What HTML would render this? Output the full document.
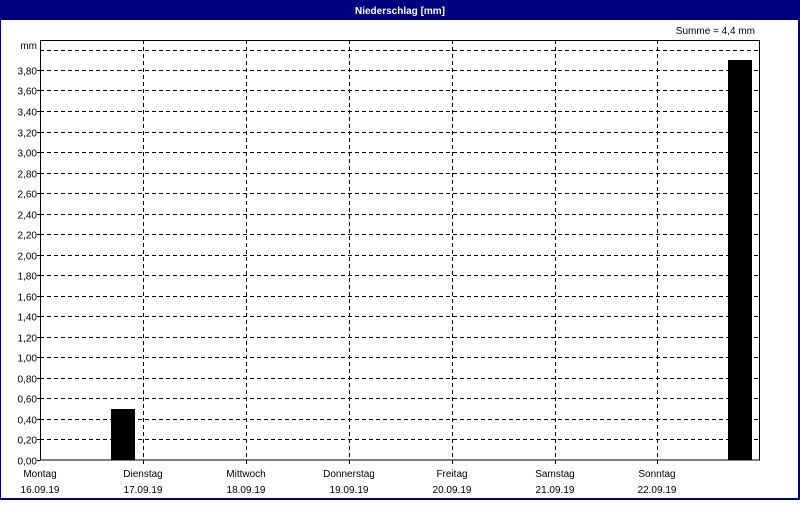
<!DOCTYPE html>
<html><head><style>
body{margin:0;width:800px;height:500px;overflow:hidden;background:#fff;font-family:"Liberation Sans",sans-serif;}
</style></head><body>
<svg width="800" height="500" xmlns="http://www.w3.org/2000/svg" font-family="Liberation Sans, sans-serif" font-size="10">
<rect x="0" y="0" width="800" height="500" fill="#000080"/>
<rect x="1" y="20" width="797" height="478" fill="#fff"/>
<text x="400" y="14" fill="#fff" font-weight="bold" text-anchor="middle" font-size="10">Niederschlag [mm]</text>
<text x="755" y="34" text-anchor="end">Summe = 4,4 mm</text>
<text x="37" y="49" text-anchor="end">mm</text>
<g stroke="#000" stroke-dasharray="4,3" stroke-width="1">
<line x1="40" y1="50.5" x2="760" y2="50.5"/>
<line x1="143.5" y1="40" x2="143.5" y2="460"/>
<line x1="246.5" y1="40" x2="246.5" y2="460"/>
<line x1="349.5" y1="40" x2="349.5" y2="460"/>
<line x1="452.5" y1="40" x2="452.5" y2="460"/>
<line x1="555.5" y1="40" x2="555.5" y2="460"/>
<line x1="657.5" y1="40" x2="657.5" y2="460"/>
</g>
<g id="h"></g>
<rect x="111" y="409" width="24" height="51" fill="#000"/>
<rect x="728" y="60" width="24" height="400" fill="#000"/>
<rect x="40.5" y="40.5" width="719" height="419.5" fill="none" stroke="#000"/>
<g stroke="#000">
<line x1="143.5" y1="460" x2="143.5" y2="464"/><line x1="246.5" y1="460" x2="246.5" y2="464"/><line x1="349.5" y1="460" x2="349.5" y2="464"/><line x1="452.5" y1="460" x2="452.5" y2="464"/><line x1="555.5" y1="460" x2="555.5" y2="464"/><line x1="657.5" y1="460" x2="657.5" y2="464"/>
</g>
<g text-anchor="middle">
<text x="40" y="477">Montag</text><text x="40" y="493">16.09.19</text>
<text x="143" y="477">Dienstag</text><text x="143" y="493">17.09.19</text>
<text x="246" y="477">Mittwoch</text><text x="246" y="493">18.09.19</text>
<text x="349" y="477">Donnerstag</text><text x="349" y="493">19.09.19</text>
<text x="452" y="477">Freitag</text><text x="452" y="493">20.09.19</text>
<text x="555" y="477">Samstag</text><text x="555" y="493">21.09.19</text>
<text x="657" y="477">Sonntag</text><text x="657" y="493">22.09.19</text>
</g>
<g id="yl" text-anchor="end"></g>
<script>
var h=document.getElementById('h'),yl=document.getElementById('yl'),ns='http://www.w3.org/2000/svg';
for(var i=0;i<=19;i++){var y=Math.round(460-i*20.53)+0.5;
 if(i>0){var l=document.createElementNS(ns,'line');l.setAttribute('x1',40);l.setAttribute('x2',760);l.setAttribute('y1',y);l.setAttribute('y2',y);l.setAttribute('stroke','#000');l.setAttribute('stroke-dasharray','4,3');h.appendChild(l);}
 var t=document.createElementNS(ns,'text');t.setAttribute('x',37);t.setAttribute('y',y+4);t.textContent=(i*0.2).toFixed(2).replace('.',',');yl.appendChild(t);
 var k=document.createElementNS(ns,'line');k.setAttribute('x1',37);k.setAttribute('x2',40);k.setAttribute('y1',y);k.setAttribute('y2',y);k.setAttribute('stroke','#000');h.appendChild(k);}
</script>
</svg>
</body></html>
